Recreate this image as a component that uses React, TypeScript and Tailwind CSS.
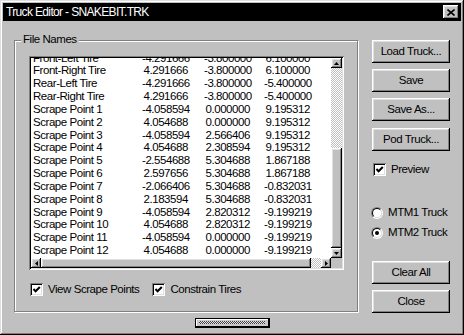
import { ReactNode } from 'react';

const rows = [
  ['Front-Left Tire', '-4.291666', '-3.800000', '6.100000'],
  ['Front-Right Tire', '4.291666', '-3.800000', '6.100000'],
  ['Rear-Left Tire', '-4.291666', '-3.800000', '-5.400000'],
  ['Rear-Right Tire', '4.291666', '-3.800000', '-5.400000'],
  ['Scrape Point 1', '-4.058594', '0.000000', '9.195312'],
  ['Scrape Point 2', '4.054688', '0.000000', '9.195312'],
  ['Scrape Point 3', '-4.058594', '2.566406', '9.195312'],
  ['Scrape Point 4', '4.054688', '2.308594', '9.195312'],
  ['Scrape Point 5', '-2.554688', '5.304688', '1.867188'],
  ['Scrape Point 6', '2.597656', '5.304688', '1.867188'],
  ['Scrape Point 7', '-2.066406', '5.304688', '-0.832031'],
  ['Scrape Point 8', '2.183594', '5.304688', '-0.832031'],
  ['Scrape Point 9', '-4.058594', '2.820312', '-9.199219'],
  ['Scrape Point 10', '4.054688', '2.820312', '-9.199219'],
  ['Scrape Point 11', '-4.058594', '0.000000', '-9.199219'],
  ['Scrape Point 12', '4.054688', '0.000000', '-9.199219'],
];

// win95 style bevels
const raised =
  'shadow-[inset_-1px_-1px_#000,inset_1px_1px_#fff,inset_-2px_-2px_#808080,inset_2px_2px_#dfdfdf]';
const sunken =
  'shadow-[inset_1px_1px_#808080,inset_-1px_-1px_#fff,inset_2px_2px_#000,inset_-2px_-2px_#dfdfdf]';
const checker =
  'bg-[image:repeating-conic-gradient(#fff_0_25%,#c0c0c0_0_50%)] bg-[length:2px_2px]';

function Button({ label, className }: { label: string; className?: string }) {
  return (
    <button className={`h-[23px] w-[78px] bg-[#c0c0c0] flex items-center justify-center ${raised} ${className ?? ''}`}>
      {label}
    </button>
  );
}

function Check({ label, className }: { label: string; className?: string }) {
  return (
    <div className={`flex items-center h-[13px] gap-[5px] ${className ?? ''}`}>
      <span className={`w-[13px] h-[13px] bg-white flex items-center justify-center ${sunken}`}>
        <svg width="9" height="9" viewBox="0 0 9 9">
          <path d="M1.5 4 L3.6 6.3 L7.8 2" stroke="#000" strokeWidth="2" fill="none" />
        </svg>
      </span>
      <span>{label}</span>
    </div>
  );
}

function Radio({ label, checked, className }: { label: string; checked?: boolean; className?: string }) {
  return (
    <div className={`flex items-center h-[13px] gap-[5px] ${className ?? ''}`}>
      <span className="w-[12px] h-[12px] rounded-full border border-t-[#808080] border-l-[#808080] border-r-white border-b-white">
        <span className="w-full h-full rounded-full border border-t-black border-l-black border-r-[#dfdfdf] border-b-[#dfdfdf] bg-white flex items-center justify-center">
          {checked && <span className="w-[4px] h-[4px] rounded-full bg-black" />}
        </span>
      </span>
      <span>{label}</span>
    </div>
  );
}

function ArrowBtn({ className, children }: { className: string; children: ReactNode }) {
  return (
    <div className={`bg-[#c0c0c0] flex items-center justify-center ${raised} ${className}`}>
      {children}
    </div>
  );
}

export default function App() {
  return (
    <div className="w-[464px] h-[335px] bg-[#c0c0c0] font-['Liberation_Sans',Arial,sans-serif] text-[11.5px] tracking-[-0.45px] text-black shadow-[inset_-1px_-1px_#000,inset_1px_1px_#dfdfdf,inset_-2px_-2px_#808080,inset_2px_2px_#fff] flex flex-col">
      <div className="mx-[3px] mt-[3px] h-[18px] bg-black flex items-center justify-between pl-[3px] pr-[2px]">
        <span className="text-white text-[12px] tracking-[-0.65px]">Truck Editor - SNAKEBIT.TRK</span>
        <div className={`w-[16px] h-[14px] bg-[#c0c0c0] flex items-center justify-center ${raised}`}>
          <svg width="8" height="7" viewBox="0 0 8 7">
            <path d="M0.5 0.5 L7.5 6.5 M7.5 0.5 L0.5 6.5" stroke="#000" strokeWidth="1.6" />
          </svg>
        </div>
      </div>

      <div className="flex">
        <div className="relative ml-[14px] mt-[19px] w-[344px] h-[272px] border border-[#808080] shadow-[inset_1px_1px_#fff,1px_1px_#fff] pl-[14px] pt-[15px]">
          <span className="absolute left-[6px] -top-[8px] px-[2px] leading-[13px] bg-[#c0c0c0]">File Names</span>

          <div className={`w-[315px] h-[214px] bg-white p-[2px] ${sunken}`}>
            <div className="grid grid-cols-[1fr_11px] grid-rows-[1fr_10px] h-full">
              <div className="overflow-hidden pl-[2px] whitespace-nowrap">
                <div className="-mt-[6.5px]">
                  {rows.map((r) => (
                    <div key={r[0]} className="flex leading-[12.85px]">
                      <span className="w-[109px] shrink-0">{r[0]}</span>
                      <span className={`w-[62px] shrink-0 ${r[1].startsWith('-') ? '' : 'pl-[1.5px]'}`}>{r[1]}</span>
                      <span className={`w-[60px] shrink-0 ${r[2].startsWith('-') ? '' : 'pl-[1.5px]'}`}>{r[2]}</span>
                      <span className={`shrink-0 ${r[3].startsWith('-') ? '' : 'pl-[1.5px]'}`}>{r[3]}</span>
                    </div>
                  ))}
                </div>
              </div>

              <div className="flex flex-col">
                <ArrowBtn className="h-[10px]">
                  <svg width="5" height="3" viewBox="0 0 5 3"><path d="M2.5 0L5 3H0z" /></svg>
                </ArrowBtn>
                <div className={`flex-1 ${checker}`} />
                <div className={`h-[100px] bg-[#c0c0c0] ${raised}`} />
                <ArrowBtn className="h-[10px]">
                  <svg width="5" height="3" viewBox="0 0 5 3"><path d="M0 0H5L2.5 3z" /></svg>
                </ArrowBtn>
              </div>

              <div className="flex">
                <ArrowBtn className="w-[10px]">
                  <svg width="3" height="5" viewBox="0 0 3 5"><path d="M0 2.5L3 0V5z" /></svg>
                </ArrowBtn>
                <div className={`flex-1 bg-[#c0c0c0] ${raised}`} />
                <div className={`w-[10px] ${checker}`} />
                <ArrowBtn className="w-[10px]">
                  <svg width="3" height="5" viewBox="0 0 3 5"><path d="M0 0L3 2.5L0 5z" /></svg>
                </ArrowBtn>
              </div>
              <div className="bg-[#c0c0c0]" />
            </div>
          </div>

          <div className="flex gap-[13px] mt-[13px] ml-[1px]">
            <Check label="View Scrape Points" />
            <Check label="Constrain Tires" />
          </div>
        </div>

        <div className="ml-[14px] flex flex-col">
          <Button label="Load Truck..." className="mt-[19px]" />
          <Button label="Save" className="mt-[6px]" />
          <Button label="Save As..." className="mt-[6px]" />
          <Button label="Pod Truck..." className="mt-[7px]" />
          <Check label="Preview" className="mt-[12px] ml-[1px]" />
          <Radio label="MTM1 Truck" className="mt-[30px] -ml-[1px]" />
          <Radio label="MTM2 Truck" checked className="mt-[7px] -ml-[1px]" />
          <Button label="Clear All" className="mt-[22px]" />
          <Button label="Close" className="mt-[6px]" />
        </div>
      </div>

      <div className="mt-[5px] mx-auto w-[75px] h-[10px] border border-b-2 border-r-2 border-black bg-[#c8c8c8] shadow-[inset_1px_1px_#fff] flex items-center px-[3px]">
        <div className="flex-1 h-[3px] bg-[image:repeating-conic-gradient(#404040_0_25%,#e0e0e0_0_50%)] bg-[length:2px_2px]" />
      </div>
    </div>
  );
}
